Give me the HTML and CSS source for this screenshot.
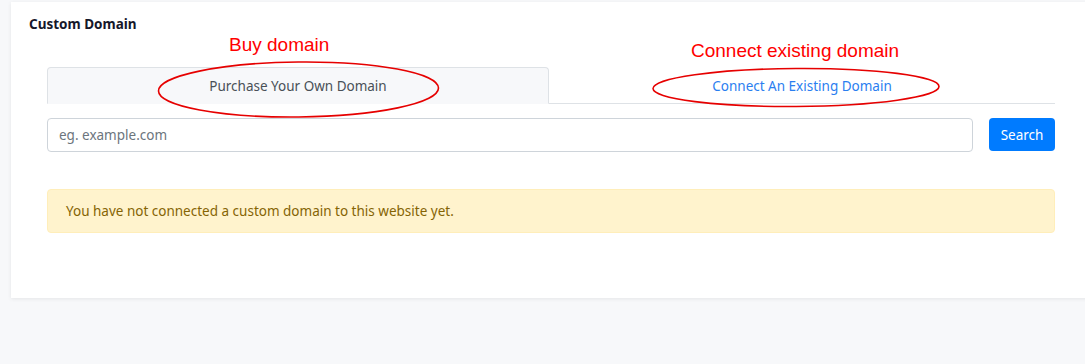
FILE: index.html
```html
<!DOCTYPE html>
<html lang="en">
<head>
  <meta charset="UTF-8">
  <title>Custom Domain</title>
  <link rel="stylesheet" href="styles.css">
</head>
<body>
  <div class="card">
    <h2 class="card-title">Custom Domain</h2>

    <div class="card-body">
      <div class="tabs">
        <a class="tab active">Purchase Your Own Domain</a>
        <a class="tab">Connect An Existing Domain</a>
      </div>

      <div class="search-row">
        <input class="domain-input" type="text" placeholder="eg. example.com">
        <button class="btn-search">Search</button>
      </div>

      <div class="alert">You have not connected a custom domain to this website yet.</div>
    </div>
  </div>

  <!-- hand-drawn annotations on top of the screenshot -->
  <svg class="notes" width="1085" height="364" viewBox="0 0 1085 364">
    <text x="229" y="51">Buy domain</text>
    <text x="691" y="57">Connect existing domain</text>
    <ellipse cx="298.5" cy="89.5" rx="140" ry="27.5" transform="rotate(-0.6 298.5 89.5)"></ellipse>
    <ellipse cx="796" cy="87.5" rx="143" ry="19" transform="rotate(-0.4 796 87.5)"></ellipse>
  </svg>
</body>
</html>
```

FILE: styles.css
```css
html, body {
  margin: 0;
  height: 100%;
}
body {
  background-color: #f7f8fa;
  font-family: "Noto Sans", "Open Sans", sans-serif;
  font-size: 13.5px;
  color: #495057;
  overflow: hidden;
  position: relative;
}
.card {
  margin: 2px 0 0 11px;
  width: 1090px;
  background-color: #fff;
  box-shadow: 0 1px 4px rgba(0,0,0,0.08);
  padding: 13px 0 65px 18px;
  box-sizing: border-box;
}
.card-title {
  margin: 0;
  font-size: 13.5px;
  line-height: 18px;
  font-weight: 700;
  color: #16172a;
}
.card-body {
  margin: 34px 0 0 18px;
  width: 1008px;
}
.tabs {
  display: flex;
  border-bottom: 1px solid #dee2e6;
}
.tab {
  flex: 1;
  height: 37px;
  box-sizing: border-box;
  display: flex;
  align-items: center;
  justify-content: center;
  color: #2a7ef0;
  border: 1px solid transparent;
  border-radius: 4px 4px 0 0;
  margin-bottom: -1px;
}
.tab.active {
  flex: 0 0 502px;
  color: #495057;
  background-color: #f7f8fa;
  border-color: #dee2e6 #dee2e6 #f7f8fa;
}
.search-row {
  display: flex;
  gap: 16px;
  margin-top: 14px;
}
.domain-input {
  flex: 1;
  height: 34px;
  box-sizing: border-box;
  border: 1px solid #ced4da;
  border-radius: 4px;
  padding: 0 11px;
  font-family: inherit;
  font-size: 13.5px;
  color: #495057;
  outline: none;
}
.domain-input::placeholder {
  color: #6c757d;
}
.btn-search {
  width: 66px;
  height: 33px;
  border: none;
  border-radius: 4px;
  background-color: #007bff;
  color: #fff;
  font-family: inherit;
  font-size: 13.5px;
  cursor: pointer;
}
.alert {
  margin-top: 37px;
  height: 44px;
  box-sizing: border-box;
  display: flex;
  align-items: center;
  padding: 0 18px;
  background-color: #fff3cd;
  border: 1px solid #ffeeba;
  border-radius: 4px;
  color: #856404;
}
.notes {
  position: absolute;
  left: 0;
  top: 0;
  pointer-events: none;
}
.notes text {
  font-family: "Liberation Sans", Arial, sans-serif;
  font-size: 19px;
  fill: #ff0000;
}
.notes ellipse {
  fill: none;
  stroke: #e60000;
  stroke-width: 1.6;
}
```
